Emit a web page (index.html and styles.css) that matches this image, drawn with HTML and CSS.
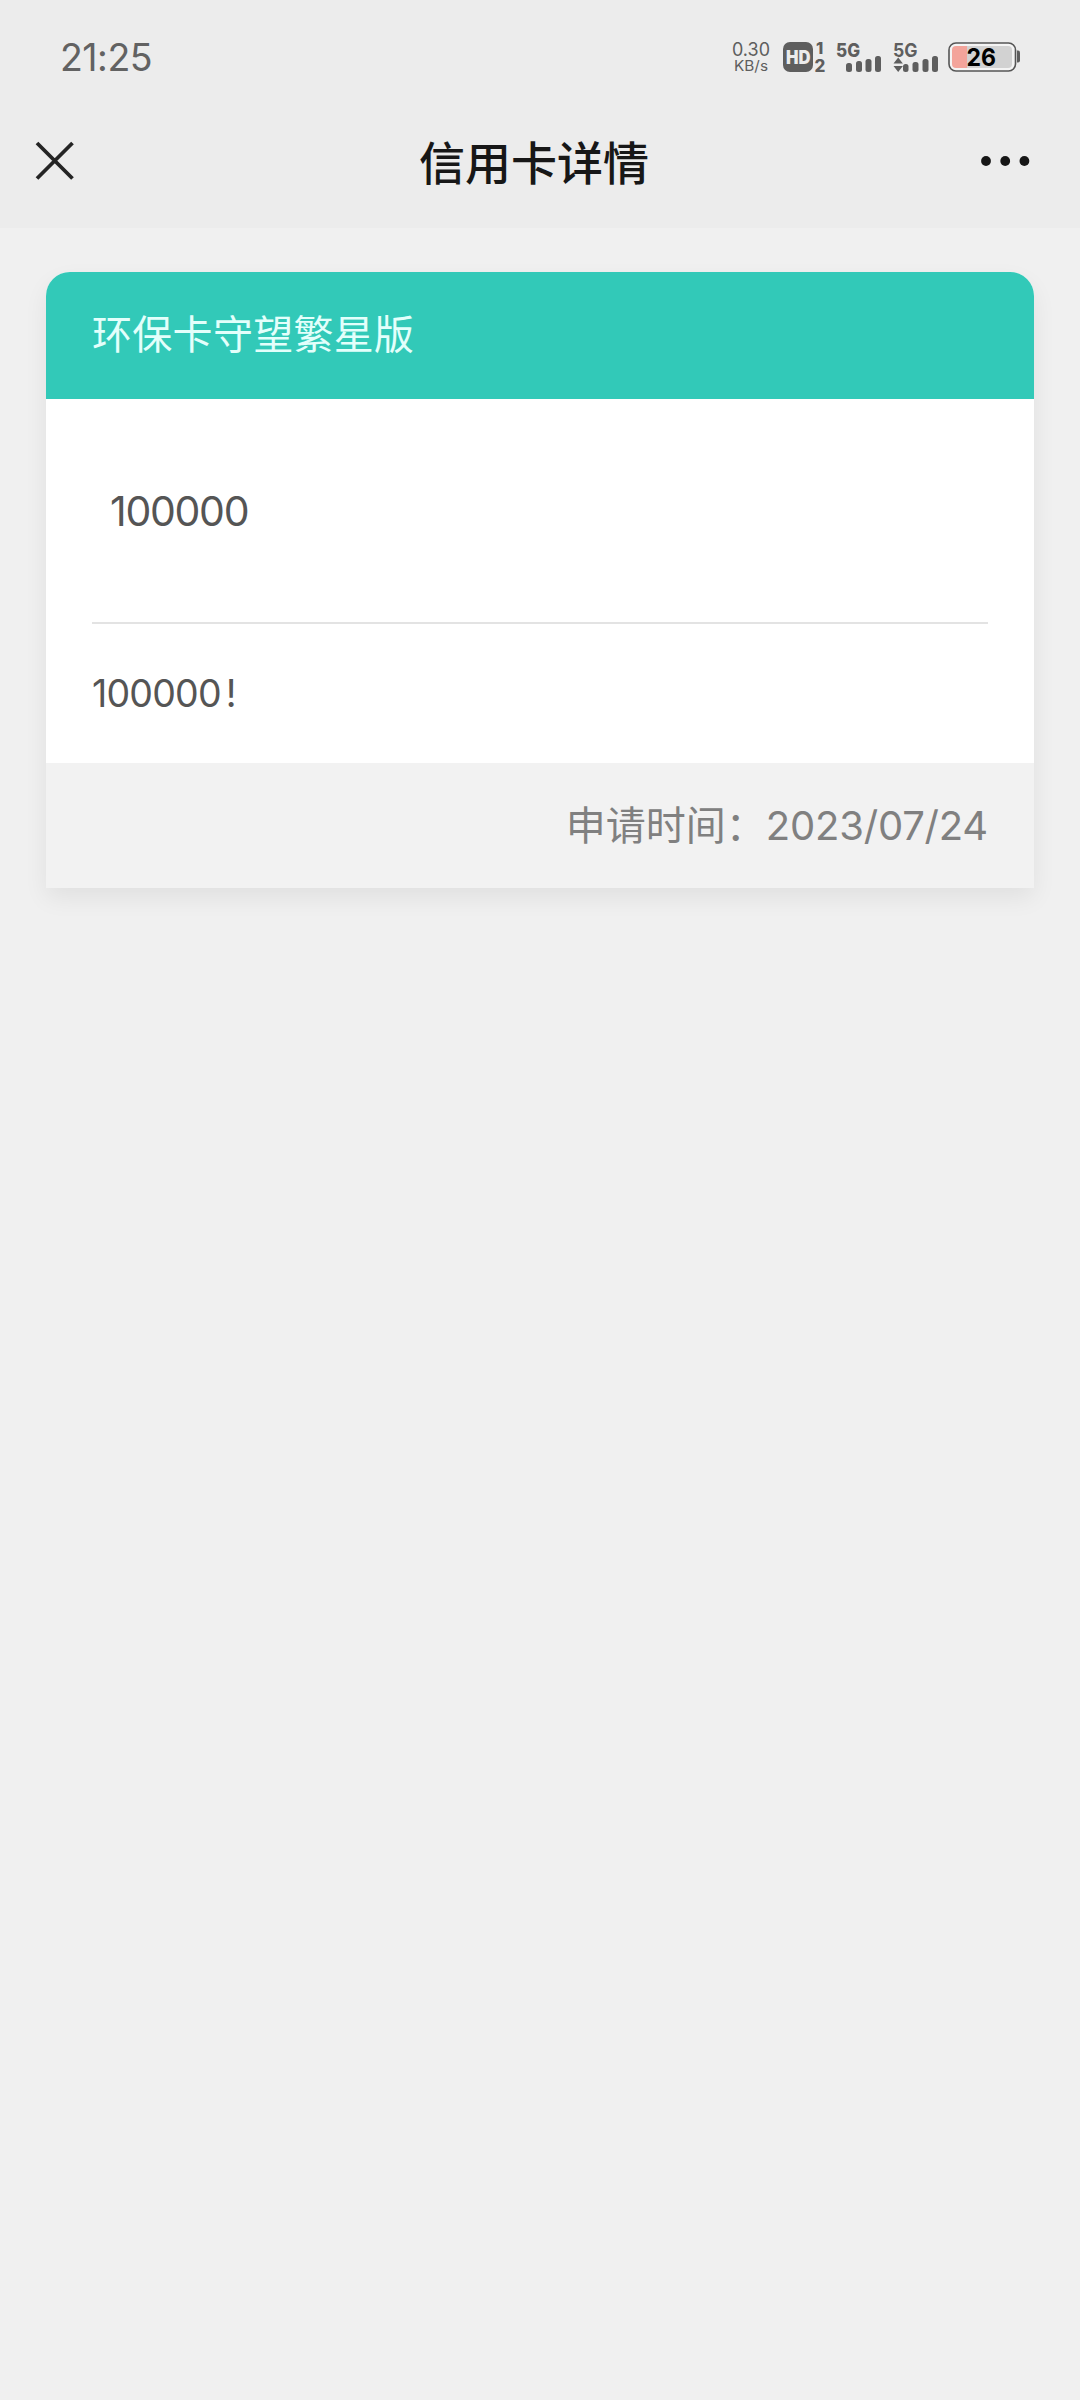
FILE: index.html
```html
<!DOCTYPE html>
<html lang="zh-CN">
<head>
<meta charset="utf-8">
<title>信用卡详情</title>
<link rel="stylesheet" href="styles.css">
</head>
<body>
<header class="top">
  <div class="status">
    <span class="clock">21:25</span>
    <svg class="indicators" width="310" height="54" viewBox="0 0 310 54" fill="#5e5e5e">
      <text x="12" y="26" font-size="18.5" textLength="38" lengthAdjust="spacingAndGlyphs">0.30</text>
      <text x="14" y="41" font-size="14.5" textLength="34" lengthAdjust="spacingAndGlyphs">KB/s</text>
      <rect x="63" y="12" width="30" height="30" rx="7"/>
      <text x="66" y="33.500" font-size="18.500" font-weight="900" fill="#ececec" textLength="24.500" lengthAdjust="spacingAndGlyphs">HD</text>
      <text x="96" y="24" font-size="16.500" font-weight="800">1</text>
      <text x="94.500" y="41.500" font-size="17" font-weight="800">2</text>
      <text x="116" y="26.500" font-size="18.500" font-weight="800" textLength="24" lengthAdjust="spacingAndGlyphs">5G</text>
      <rect x="126" y="33" width="6" height="9" rx="2.500"/>
      <rect x="136" y="31" width="6" height="11" rx="2.500"/>
      <rect x="145.500" y="29" width="6" height="13" rx="2.500"/>
      <rect x="155" y="26" width="6" height="16" rx="2.500"/>
      <text x="173" y="26.500" font-size="18.500" font-weight="700" textLength="24.500" lengthAdjust="spacingAndGlyphs">5G</text>
      <path d="M173.500 33.500l4.700-6 4.700 6zM173.500 36l4.700 6 4.700-6z"/>
      <rect x="183" y="34" width="5.500" height="8" rx="2.500"/>
      <rect x="192.500" y="32" width="6" height="10" rx="2.500"/>
      <rect x="202.500" y="29" width="6" height="13" rx="2.500"/>
      <rect x="212" y="26" width="6" height="16" rx="2.500"/>
      <rect x="229" y="13" width="66.500" height="28" rx="7" fill="#f4f4f4" stroke="#555" stroke-width="1.600"/>
      <path d="M247 16h41q4 0 4 4v14q0 4-4 4h-41z" fill="#d2d2d2"/>
      <path d="M247 16h-11q-4 0-4 4v14q0 4 4 4h11z" fill="#f3a49b"/>
      <path d="M297 20.500h1q2 0 2 2v8q0 2-2 2h-1z"/>
      <text x="246.500" y="36" font-size="24.500" font-weight="700" fill="#000" textLength="29.500" lengthAdjust="spacingAndGlyphs">26</text>
    </svg>
  </div>
  <nav class="nav">
    <svg class="close" width="40" height="40" viewBox="0 0 40 40" fill="none" stroke="#242424" stroke-width="3.800"><path d="M2 2l35.500 35.500M37.500 2L2 37.500"/></svg>
    <h1 class="nav-title">信用卡详情</h1>
    <svg class="more" width="50" height="12" viewBox="0 0 50 12" fill="#161616"><circle cx="6" cy="6" r="4.900"/><circle cx="25.200" cy="6" r="4.900"/><circle cx="44.400" cy="6" r="4.900"/></svg>
  </nav>
</header>
<main class="page">
  <section class="card">
    <h2 class="card-head">环保卡守望繁星版</h2>
    <div class="card-body">
      <p class="amount">100000</p>
      <p class="note">100000<span class="mark">!</span></p>
    </div>
    <footer class="card-foot"><span class="label">申请时间：</span><span class="date">2023/07/24</span></footer>
  </section>
</main>
</body>
</html>
```
FILE: styles.css
```css
* { box-sizing: border-box; }
body {
  margin: 0;
  min-height: 2400px;
  background: #f0f0f0;
  font-family: Inter, "Noto Sans CJK SC", sans-serif;
}
h1, h2, p { margin: 0; font-weight: 400; }
svg { display: block; flex: none; }
.top { height: 228px; background: #ececec; }
.status {
  height: 113px;
  padding: 30px 50px 0 60px;
  display: flex;
  justify-content: space-between;
  align-items: flex-start;
}
.clock { font-size: 37.5px; line-height: 56px; letter-spacing: -0.5px; color: #626262; }
.indicators { font-family: Inter, sans-serif; }
.nav {
  height: 96px;
  padding: 0 50px 0 35px;
  display: grid;
  grid-template-columns: 1fr auto 1fr;
  align-items: center;
}
.nav-title {
  padding: 0 0 3px 3px;
  font-size: 46px;
  line-height: 60px;
  font-weight: 500;
  color: #171717;
  font-family: "Noto Sans CJK SC", sans-serif;
}
.more { justify-self: end; }
.page { padding: 44px 46px; }
.card {
  height: 616px;
  border-radius: 24px 24px 0 0;
  background: #fff;
  box-shadow: 0 10px 24px rgba(0, 0, 0, 0.065);
}
.card-head {
  height: 127px;
  padding: 0 46px;
  border-radius: 24px 24px 0 0;
  background: #32c9b8;
  color: #e3fffb;
  font: 400 40px/121px "Noto Sans CJK SC", sans-serif;
  letter-spacing: 0.3px;
}
.card-body { height: 364px; padding: 0 46px; color: #555; }
.amount {
  height: 225px;
  padding-left: 18px;
  border-bottom: 2px solid #e3e3e3;
  font-size: 41px;
  line-height: 225px;
  letter-spacing: -1.3px;
}
.note { font-size: 37.5px; line-height: 139px; letter-spacing: -0.8px; }
.mark { margin-left: 5px; }
.card-foot {
  height: 125px;
  padding: 0 46px;
  display: flex;
  justify-content: flex-end;
  background: #f2f2f2;
  color: #808080;
  font: 400 40px/125px "Noto Sans CJK SC", sans-serif;
}
.label { line-height: 121px; }
.date { font-family: Inter, sans-serif; letter-spacing: -0.2px; }
```
